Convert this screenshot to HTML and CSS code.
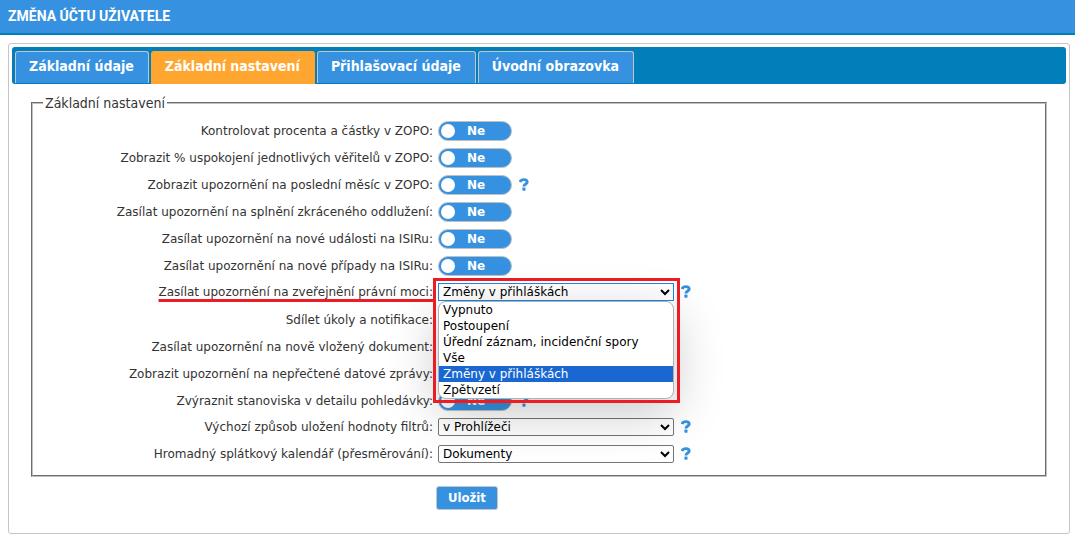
FILE: index.html
```html
<!DOCTYPE html>
<html lang="cs">
<head>
<meta charset="utf-8">
<title>Změna účtu uživatele</title>
<link rel="stylesheet" href="styles.css">
</head>
<body>
<svg class="defs" aria-hidden="true">
  <symbol id="question" viewBox="0 0 10 13">
    <path d="M1.1 4C1.6 2.3 3 1.6 4.8 1.6c2.1 0 3.4 .9 3.4 2.4 0 2-3.3 2-3.3 4.6" fill="none" stroke="currentColor" stroke-width="2.9"/>
    <rect x="3.4" y="9.6" width="3.1" height="3.1" rx=".6" fill="currentColor"/>
  </symbol>
</svg>
<header class="title-bar"><h1 class="title">ZMĚNA ÚČTU UŽIVATELE</h1></header>
<main class="panel">
  <nav class="tabs">
    <a class="tab" href="#udaje">Základní údaje</a>
    <a class="tab tab-active" href="#nastaveni" aria-current="page">Základní nastavení</a>
    <a class="tab" href="#prihlaseni">Přihlašovací údaje</a>
    <a class="tab" href="#uvod">Úvodní obrazovka</a>
  </nav>
  <form class="form">
    <fieldset class="group">
      <legend class="legend">Základní nastavení</legend>
      <div class="row">
        <label class="label" for="procenta">Kontrolovat procenta a částky v ZOPO:</label>
        <span class="switch"><input class="switch-input" type="checkbox" id="procenta"><span class="switch-text">Ne</span></span>
      </div>
      <div class="row">
        <label class="label" for="uspokojeni">Zobrazit % uspokojení jednotlivých věřitelů v ZOPO:</label>
        <span class="switch"><input class="switch-input" type="checkbox" id="uspokojeni"><span class="switch-text">Ne</span></span>
      </div>
      <div class="row">
        <label class="label" for="mesic">Zobrazit upozornění na poslední měsíc v ZOPO:</label>
        <span class="switch"><input class="switch-input" type="checkbox" id="mesic"><span class="switch-text">Ne</span></span>
        <button class="help" type="button" aria-label="Nápověda"><svg class="help-icon"><use href="#question"/></svg></button>
      </div>
      <div class="row">
        <label class="label" for="oddluzeni">Zasílat upozornění na splnění zkráceného oddlužení:</label>
        <span class="switch"><input class="switch-input" type="checkbox" id="oddluzeni"><span class="switch-text">Ne</span></span>
      </div>
      <div class="row">
        <label class="label" for="udalosti">Zasílat upozornění na nové události na ISIRu:</label>
        <span class="switch"><input class="switch-input" type="checkbox" id="udalosti"><span class="switch-text">Ne</span></span>
      </div>
      <div class="row">
        <label class="label" for="pripady">Zasílat upozornění na nové případy na ISIRu:</label>
        <span class="switch"><input class="switch-input" type="checkbox" id="pripady"><span class="switch-text">Ne</span></span>
      </div>
      <div class="row row-select">
        <label class="label label-marked" for="moc">Zasílat upozornění na zveřejnění právní moci:</label>
        <div class="dropdown">
          <select class="select select-open" id="moc">
            <option>Vypnuto</option>
            <option>Postoupení</option>
            <option>Úřední záznam, incidenční spory</option>
            <option>Vše</option>
            <option selected>Změny v přihláškách</option>
            <option>Zpětvzetí</option>
          </select>
          <ul class="options" role="listbox" aria-label="Možnosti">
            <li class="option" role="option">Vypnuto</li>
            <li class="option" role="option">Postoupení</li>
            <li class="option" role="option">Úřední záznam, incidenční spory</li>
            <li class="option" role="option">Vše</li>
            <li class="option option-selected" role="option" aria-selected="true">Změny v přihláškách</li>
            <li class="option" role="option">Zpětvzetí</li>
          </ul>
          <span class="highlight"></span>
        </div>
        <button class="help" type="button" aria-label="Nápověda"><svg class="help-icon"><use href="#question"/></svg></button>
      </div>
      <div class="row">
        <label class="label" for="ukoly">Sdílet úkoly a notifikace:</label>
        <span class="switch"><input class="switch-input" type="checkbox" id="ukoly"></span>
      </div>
      <div class="row">
        <label class="label" for="dokument">Zasílat upozornění na nově vložený dokument:</label>
        <span class="switch"><input class="switch-input" type="checkbox" id="dokument"></span>
      </div>
      <div class="row">
        <label class="label" for="zpravy">Zobrazit upozornění na nepřečtené datové zprávy:</label>
        <span class="switch"><input class="switch-input" type="checkbox" id="zpravy"></span>
      </div>
      <div class="row">
        <label class="label" for="stanoviska">Zvýraznit stanoviska v detailu pohledávky:</label>
        <span class="switch"><input class="switch-input" type="checkbox" id="stanoviska"><span class="switch-text">Ne</span></span>
        <button class="help" type="button" aria-label="Nápověda"><svg class="help-icon"><use href="#question"/></svg></button>
      </div>
      <div class="row row-select">
        <label class="label" for="filtry">Výchozí způsob uložení hodnoty filtrů:</label>
        <select class="select" id="filtry"><option>v Prohlížeči</option></select>
        <button class="help" type="button" aria-label="Nápověda"><svg class="help-icon"><use href="#question"/></svg></button>
      </div>
      <div class="row row-select">
        <label class="label" for="kalendar">Hromadný splátkový kalendář (přesměrování):</label>
        <select class="select" id="kalendar"><option>Dokumenty</option></select>
        <button class="help" type="button" aria-label="Nápověda"><svg class="help-icon"><use href="#question"/></svg></button>
      </div>
    </fieldset>
    <div class="actions"><button class="save" type="submit">Uložit</button></div>
  </form>
</main>
</body>
</html>
```
FILE: styles.css
```css
* { box-sizing: border-box; }
body {
  margin: 0;
  background: #fff;
  color: #333;
  font: 12px/16px "DejaVu Sans", Verdana, sans-serif;
}
.defs { position: absolute; width: 0; height: 0; }
.title-bar {
  padding: 8px;
  background: #3692e1;
  border-bottom: 2px solid #007fba;
}
.title {
  margin: 0;
  color: #fff;
  font: bold 14px/17px Roboto, Arial, sans-serif;
}
.panel {
  margin: 8px 5px 3px 8px;
  padding: 3px;
  border: 1px solid #c5c5c5;
  border-radius: 3px;
}
.tabs {
  display: flex;
  gap: 2px;
  padding: 4px 3px 0;
  background: #007fba;
  border-radius: 3px;
  font: bold 14px/16px "DejaVu Sans Condensed", Verdana, sans-serif;
}
.tab {
  padding: 6px 14px 9px 13px;
  margin-bottom: 1px;
  color: #fff;
  background: #3692e1;
  border: 1px solid #c5c5c5;
  border-bottom: 0;
  border-radius: 3px 3px 0 0;
  text-decoration: none;
  white-space: nowrap;
}
.tab-active {
  padding-bottom: 10px;
  margin-bottom: 0;
  background: #ffa631;
  border-color: #ffa631;
}
.form { padding: 11px 19px 20px; }
.group {
  margin: 0;
  padding: 6px 0 7px;
  border: 2px groove #c0c0c0;
}
.legend {
  margin-left: 10px;
  padding: 0 2px;
  font: 14px/16px "DejaVu Sans Condensed", Verdana, sans-serif;
}
.row {
  display: flex;
  align-items: center;
  height: 27px;
}
.row-select { padding-bottom: 2px; }
.label {
  flex: none;
  width: 400px;
  margin-right: 5px;
  text-align: right;
}
.label-marked {
  text-decoration: underline #ed1c24 3px;
  text-underline-offset: 3px;
  text-decoration-skip-ink: none;
}
.switch {
  position: relative;
  display: flex;
  width: 74px;
  height: 20px;
}
.switch-input {
  appearance: none;
  display: flex;
  align-items: center;
  width: 100%;
  height: 100%;
  margin: 0;
  padding: 0 2px;
  background: #3692e1;
  border: 1px solid #c0c0c0;
  border-radius: 10px;
}
.switch-input::before {
  content: "";
  width: 14px;
  height: 14px;
  border-radius: 50%;
  background: #fff;
}
.switch-text {
  position: absolute;
  inset: 2px 0 2px 29px;
  color: #fff;
  font-weight: bold;
  pointer-events: none;
}
.select {
  width: 236px;
  height: 18px;
  padding: 0;
  color: #000;
  background: #fff;
  border: 1px solid #767676;
  border-radius: 2px;
  font: inherit;
}
.select-open { border-color: #1a86e8; border-radius: 0; }
.dropdown { position: relative; display: flex; }
.options {
  position: absolute;
  z-index: 1;
  top: 100%;
  left: 0;
  width: 100%;
  margin: 0;
  padding: 0;
  overflow: hidden;
  list-style: none;
  color: #000;
  background: #fff;
  border: 1px solid #b0b0b0;
  border-radius: 8px;
  box-shadow: 0 14px 50px rgba(0, 0, 0, .22);
}
.option { padding: 0 4px; }
.option-selected { color: #fff; background: #1967d2; }
.highlight {
  position: absolute;
  z-index: 2;
  inset: -5px -6px -102px -5px;
  border: 3px solid #ed1c24;
  pointer-events: none;
}
.help {
  display: flex;
  margin: 0 0 0 7px;
  padding: 0;
  color: #3692e1;
  background: none;
  border: 0;
}
.help-icon { width: 10px; height: 13px; }
.actions { padding: 9px 0 0 405px; }
.save {
  display: block;
  padding: 3px 11px;
  color: #fff;
  background: #3692e1;
  border: 1px solid #c5c5c5;
  border-radius: 3px;
  font: bold 13px/16px "DejaVu Sans Condensed", Verdana, sans-serif;
}
```
